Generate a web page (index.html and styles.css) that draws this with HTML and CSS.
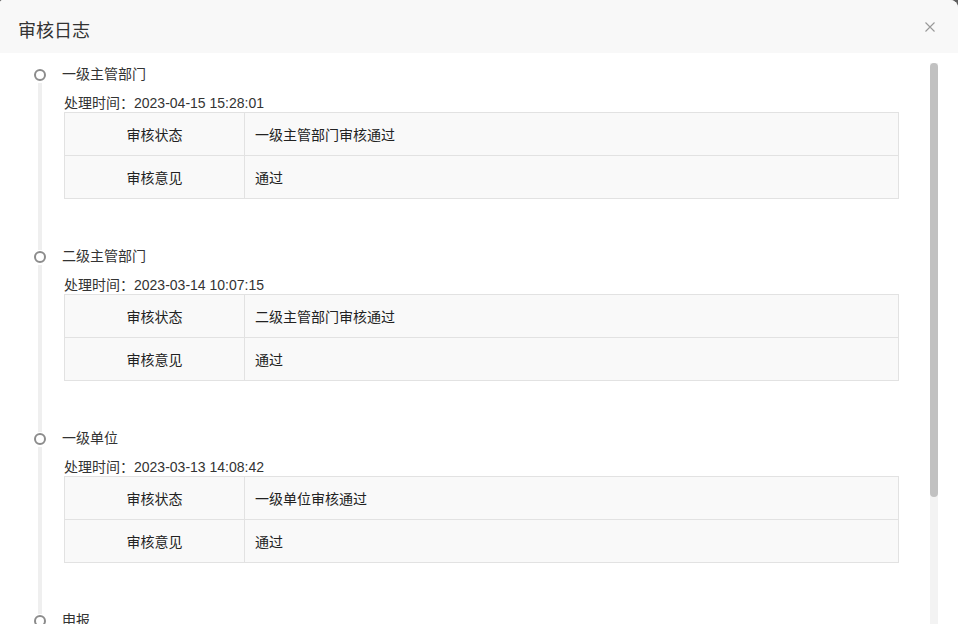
FILE: index.html
```html
<!DOCTYPE html>
<html lang="zh-CN">
<head>
    <meta charset="UTF-8">
    <meta name="viewport" content="width=device-width, initial-scale=1.0">
    <title>审核日志</title>
    <link rel="stylesheet" href="styles.css">
</head>
<body>

<div class="dialog">
    <div class="dialog-header">
        <span class="dialog-title">审核日志</span>
        <span class="dialog-close">
            <svg width="10" height="10" viewBox="0 0 10 10"><path d="M0.5 0.5L9.5 9.5M9.5 0.5L0.5 9.5" stroke="#999" stroke-width="1.1" fill="none"/></svg>
        </span>
    </div>

    <div class="dialog-body">
        <div class="log-list">

            <div class="log-item">
                <div class="rail"><span class="dot"></span><span class="tail"></span></div>
                <div class="log-content">
                    <div class="log-name">一级主管部门</div>
                    <div class="log-time">处理时间：2023-04-15 15:28:01</div>
                    <table class="log-table">
                        <tr><td class="key">审核状态</td><td>一级主管部门审核通过</td></tr>
                        <tr><td class="key">审核意见</td><td>通过</td></tr>
                    </table>
                </div>
            </div>

            <div class="log-item">
                <div class="rail"><span class="dot"></span><span class="tail"></span></div>
                <div class="log-content">
                    <div class="log-name">二级主管部门</div>
                    <div class="log-time">处理时间：2023-03-14 10:07:15</div>
                    <table class="log-table">
                        <tr><td class="key">审核状态</td><td>二级主管部门审核通过</td></tr>
                        <tr><td class="key">审核意见</td><td>通过</td></tr>
                    </table>
                </div>
            </div>

            <div class="log-item">
                <div class="rail"><span class="dot"></span><span class="tail"></span></div>
                <div class="log-content">
                    <div class="log-name">一级单位</div>
                    <div class="log-time">处理时间：2023-03-13 14:08:42</div>
                    <table class="log-table">
                        <tr><td class="key">审核状态</td><td>一级单位审核通过</td></tr>
                        <tr><td class="key">审核意见</td><td>通过</td></tr>
                    </table>
                </div>
            </div>

            <div class="log-item last">
                <div class="rail"><span class="dot"></span></div>
                <div class="log-content">
                    <div class="log-name">申报</div>
                </div>
            </div>

        </div>
        <div class="scroll-track"><div class="scroll-thumb"></div></div>
    </div>
</div>

</body>
</html>
```

FILE: styles.css
```css
html, body {
    margin: 0;
    height: 100%;
}
body {
    background-color: #5f5f5f;
    font-family: "Liberation Sans", "Noto Sans CJK SC", sans-serif;
    font-size: 14px;
    color: #333;
}
.dialog {
    height: 100%;
    background-color: #fff;
    border-radius: 3px 8px 0 0;
    overflow: hidden;
    display: flex;
    flex-direction: column;
}
.dialog-header {
    height: 53px;
    box-sizing: border-box;
    padding: 20px 18px 0 18px;
    background-color: #f8f8f8;
    display: flex;
    justify-content: space-between;
    align-items: flex-start;
}
.dialog-title {
    font-size: 18px;
    line-height: 22px;
    color: #333;
}
.dialog-close {
    display: flex;
    margin-top: 2px;
    margin-right: 5px;
}
.dialog-body {
    flex: 1;
    min-height: 0;
    padding: 10px 20px 18px 0;
    display: flex;
}
.log-list {
    flex: 1;
    min-width: 0;
    overflow: hidden;
}
.scroll-track {
    width: 8px;
    background-color: #f3f3f3;
}
.scroll-thumb {
    height: 434px;
    background-color: #c1c1c1;
    border-radius: 4px;
}
.log-item {
    display: grid;
    grid-template-columns: 62px 1fr;
}
.rail {
    display: flex;
    flex-direction: column;
    align-items: flex-start;
    padding-left: 34px;
}
.dot {
    width: 12px;
    height: 12px;
    box-sizing: border-box;
    border: 2px solid #8c8c8c;
    border-radius: 50%;
    background-color: #fff;
    margin-top: 6px;
}
.tail {
    flex: 1;
    width: 4px;
    margin: 2px 0 -5px 4px;
    background-color: #efefef;
}
.log-content {
    padding: 0 31px 46px 0;
}
.log-name {
    line-height: 22px;
}
.log-time {
    line-height: 18px;
    margin: 9px 0 0 2px;
}
.log-table {
    width: calc(100% - 2px);
    margin-left: 2px;
    border-collapse: collapse;
    background-color: #f9f9f9;
}
.log-table td {
    border: 1px solid #e2e2e2;
    height: 43px;
    padding: 0 10px;
    box-sizing: border-box;
    color: #222;
}
.log-table td.key {
    width: 180px;
    text-align: center;
}
```
